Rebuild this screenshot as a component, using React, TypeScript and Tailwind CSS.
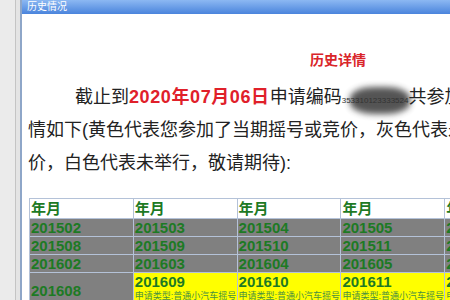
const FONT = { fontFamily: '"Liberation Sans", "Noto Sans CJK SC", sans-serif' };

const GRAY_ROWS = [
  ["201502", "201503", "201504", "201505", "201506"],
  ["201508", "201509", "201510", "201511", "201512"],
  ["201602", "201603", "201604", "201605", "201606"],
];

const YELLOW_ROW = ["201609", "201610", "201611", "201612"];

export default function App() {
  return (
    <div className="w-[450px] h-[300px] overflow-hidden bg-[#ececec] flex" style={FONT}>
      {/* left frame strip */}
      <div className="w-[20px] shrink-0 flex">
        <div className="w-[15px] bg-[#ebebeb]" />
        <div className="w-px bg-[#c4c4c4]" />
        <div className="w-[4px] bg-[#e4e4e4]" />
      </div>

      <div className="flex-1 flex flex-col min-w-0">
        <div className="h-[3px] overflow-hidden bg-[#ececec]">
          <div className="pl-[236px] -mt-[8px] text-[13px] leading-[13px] font-bold text-[#444] whitespace-nowrap tracking-[1px]">
            北京市小客车指标调控管理信息系统
          </div>
        </div>

        <div className="flex-1 flex flex-col border-l-2 border-[#8ea6c8] min-w-0">
          <div className="h-[14px] bg-gradient-to-b from-[#8cb8f2] to-[#4a84dc] flex items-center pl-[5px]">
            <span className="text-[10px] leading-none text-white">历史情况</span>
          </div>

          <div className="flex-1 bg-white pt-[37px] whitespace-nowrap overflow-hidden">
            <div className="pl-[288px] text-[14px] leading-[18px] font-bold text-[#d9252a]">历史详情</div>

            <div className="mt-[12px] pl-[6px] text-[18px] leading-[33px] text-[#222]">
              <div className="pl-[47px]">
                截止到<span className="font-bold text-[#e0202a] tracking-[0.6px]">2020年07月06日</span>申请编码
                <span className="relative inline-block text-[8px] leading-[10px] text-[#333]">
                  <span className="absolute left-[8px] right-[-2px] top-[-9px] bottom-[-8px] rounded-[40%] bg-[#2a2a2a] opacity-80 blur-[3px]" />
                  <span className="relative">353310123333524</span>
                </span>
                共参加
              </div>
              <div>情如下(黄色代表您参加了当期摇号或竞价，灰色代表未举行</div>
              <div>价，白色代表未举行，敬请期待):</div>
            </div>

            <div className="mt-[18px] ml-[7px]">
              <table className="border-collapse table-fixed w-[520px] text-[#1d7a24]">
                <tbody>
                  <tr className="bg-white h-[20px]">
                    {[0, 1, 2, 3, 4].map((i) => (
                      <td key={i} className="w-[103px] border border-[#b4c2d8] px-px text-[15px] leading-[18px] font-bold">年月</td>
                    ))}
                  </tr>
                  {GRAY_ROWS.map((row, r) => (
                    <tr key={r} className="bg-[#808080] h-[18px]">
                      {row.map((c) => (
                        <td key={c} className="border border-[#b4c2d8] px-px text-[15px] leading-[16px] font-bold">{c}</td>
                      ))}
                    </tr>
                  ))}
                  <tr>
                    <td className="bg-[#808080] border border-[#b4c2d8] px-px text-[15px] leading-[16px] font-bold align-middle h-[36px]">201608</td>
                    {YELLOW_ROW.map((c) => (
                      <td key={c} className="bg-[#ffff00] border border-[#b4c2d8] px-px align-top">
                        <div className="text-[15px] leading-[17px] font-bold">{c}</div>
                        <div className="text-[9px] leading-[12px] text-[#4a9040]">申请类型:普通小汽车摇号</div>
                      </td>
                    ))}
                  </tr>
                </tbody>
              </table>
            </div>
          </div>
        </div>
      </div>
    </div>
  );
}
